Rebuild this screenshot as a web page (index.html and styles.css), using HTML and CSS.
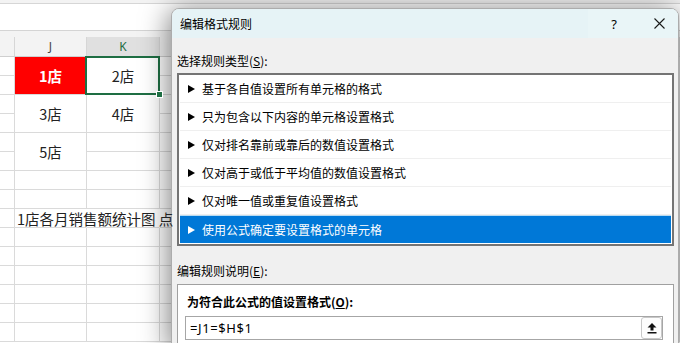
FILE: index.html
```html
<!DOCTYPE html>
<html lang="zh-CN">
<head>
  <meta charset="UTF-8" />
  <meta name="viewport" content="width=device-width, initial-scale=1.0"/>
  <title>编辑格式规则</title>
  <link rel="stylesheet" href="styles.css">
</head>
<body>
  <div class="sheet">
    <div class="ribbon"></div>
    <div class="formula-bar"></div>
    <div class="head-gap"></div>
    <div class="colhead">
      <div class="hcell"></div>
      <div class="hcell">J</div>
      <div class="hcell active">K</div>
      <div class="hcell"></div>
    </div>

    <div class="grid">
      <!-- rows 1-2 -->
      <div class="cell"></div>
      <div class="cell span2 red">1店</div>
      <div class="cell span2 sel">2店</div>
      <div class="cell"></div>
      <div class="cell"></div>
      <div class="cell"></div>
      <!-- rows 3-4 -->
      <div class="cell"></div>
      <div class="cell span2">3店</div>
      <div class="cell span2">4店</div>
      <div class="cell"></div>
      <div class="cell"></div>
      <div class="cell"></div>
      <!-- rows 5-6 -->
      <div class="cell"></div>
      <div class="cell span2">5店</div>
      <div class="cell"></div>
      <div class="cell"></div>
      <div class="cell"></div>
      <div class="cell"></div>
      <div class="cell"></div>
      <!-- row 7, 8 -->
      <div class="cell"></div><div class="cell"></div><div class="cell"></div><div class="cell"></div>
      <div class="cell"></div><div class="cell"></div><div class="cell"></div><div class="cell"></div>
      <!-- row 9: title text overflowing -->
      <div class="cell"></div>
      <div class="cell overflow">1店各月销售额统计图 点</div>
      <div class="cell open"></div>
      <div class="cell"></div>
      <!-- rows 10-15 -->
      <div class="cell"></div><div class="cell"></div><div class="cell"></div><div class="cell"></div>
      <div class="cell"></div><div class="cell"></div><div class="cell"></div><div class="cell"></div>
      <div class="cell"></div><div class="cell"></div><div class="cell"></div><div class="cell"></div>
      <div class="cell"></div><div class="cell"></div><div class="cell"></div><div class="cell"></div>
      <div class="cell"></div><div class="cell"></div><div class="cell"></div><div class="cell"></div>
      <div class="cell"></div><div class="cell"></div><div class="cell"></div><div class="cell"></div>
    </div>
  </div>

  <div class="dialog">
    <div class="titlebar">
      <span class="title">编辑格式规则</span>
      <span class="tbtn help">?</span>
      <span class="tbtn close">
        <svg width="11" height="11" viewBox="0 0 11 11"><path d="M0.5 0.5 L10.5 10.5 M10.5 0.5 L0.5 10.5" stroke="#1a1a1a" stroke-width="1.1" fill="none"/></svg>
      </span>
    </div>

    <div class="dlg-body">
      <div class="label">选择规则类型(<u>S</u>):</div>
      <ul class="rules">
        <li><span class="tri"></span>基于各自值设置所有单元格的格式</li>
        <li><span class="tri"></span>只为包含以下内容的单元格设置格式</li>
        <li><span class="tri"></span>仅对排名靠前或靠后的数值设置格式</li>
        <li><span class="tri"></span>仅对高于或低于平均值的数值设置格式</li>
        <li><span class="tri"></span>仅对唯一值或重复值设置格式</li>
        <li class="selected"><span class="tri"></span>使用公式确定要设置格式的单元格</li>
      </ul>

      <div class="label second">编辑规则说明(<u>E</u>):</div>
      <div class="desc">
        <div class="desc-label">为符合此公式的值设置格式(<u>O</u>):</div>
        <div class="formula-box">
          <span class="formula-text">=J1=$H$1</span>
          <button class="collapse">
            <svg width="10" height="12" viewBox="0 0 10 12"><path d="M5 1 L9.5 5.5 H6.5 V8.5 H3.5 V5.5 H0.5 Z" fill="#111"/><rect x="0.5" y="10" width="9" height="1.5" fill="#111"/></svg>
          </button>
        </div>
      </div>
    </div>
  </div>
</body>
</html>
```

FILE: styles.css
```css
body {
  margin: 0;
  width: 680px;
  height: 343px;
  overflow: hidden;
  position: relative;
  background: #fff;
  font-family: "Noto Sans CJK SC", sans-serif;
}

/* spreadsheet behind the dialog */
.ribbon {
  height: 3px;
  background: #f3f3f3;
  border-bottom: 1px solid #d6d6d6;
}
.formula-bar {
  height: 26px;
  border-bottom: 1px solid #d4d4d4;
}
.head-gap {
  height: 6px;
  background: #f3f3f3;
}
.colhead, .grid {
  display: grid;
  grid-template-columns: 15px 72px 73px 1fr;
}
.colhead {
  height: 19px;
  background: #f3f3f3;
  border-bottom: 1px solid #cfcfcf;
}
.hcell {
  border-right: 1px solid #d6d6d6;
  font-family: "Noto Sans", sans-serif;
  font-size: 12px;
  line-height: 19px;
  text-align: center;
  color: #444;
}
.hcell.active {
  background: #e0e0e0;
  color: #1e6e43;
}
.grid {
  grid-auto-rows: 19px;
}
.cell {
  box-sizing: border-box;
  border-right: 1px solid #dadada;
  border-bottom: 1px solid #dadada;
  font-size: 14.5px;
  color: #222;
  display: flex;
  align-items: center;
  justify-content: center;
}
.span2 {
  grid-row: span 2;
}
.red {
  background: #ff0000;
  color: #fff;
  font-weight: bold;
}
.sel {
  position: relative;
}
.sel::after {
  content: "";
  position: absolute;
  left: -2px;
  top: -1px;
  right: -1px;
  bottom: -1px;
  border: 2px solid #1e6e43;
}
.sel::before {
  content: "";
  position: absolute;
  right: -4px;
  bottom: -4px;
  width: 5px;
  height: 5px;
  background: #1e6e43;
  border: 1px solid #fff;
  z-index: 2;
}
.overflow {
  justify-content: flex-start;
  padding-left: 2px;
  white-space: nowrap;
  border-right-color: transparent;
  position: relative;
  z-index: 1;
}
.open {
  border-right-color: transparent;
}

/* dialog */
.dialog {
  position: absolute;
  left: 171px;
  top: 8px;
  width: 506px;
  height: 340px;
  border: 1px solid #acacac;
  border-radius: 8px 8px 0 0;
  background: #f0f0f0;
  box-shadow: -2px 2px 28px rgba(0, 0, 0, 0.5);
  overflow: hidden;
  font-size: 12px;
  color: #000;
}
.titlebar {
  height: 29px;
  background: #e6f3f6;
  display: flex;
  align-items: center;
  padding-left: 8px;
}
.title {
  flex: 1;
}
.tbtn {
  height: 29px;
  display: flex;
  align-items: center;
  justify-content: center;
}
.help {
  width: 52px;
  font-family: "Noto Sans", sans-serif;
  font-size: 13px;
  background: #e9f5f7;
}
.close {
  width: 38px;
  background: #e9f5f7;
}
.dlg-body {
  padding: 0 4px 0 5px;
}
.label {
  margin-top: 15px;
  line-height: 16px;
}
.label.second {
  margin-top: 17px;
}
.rules {
  list-style: none;
  margin: 4px 0 0;
  padding: 0 1px 1px;
  background: #fff;
  border: 2px solid #747474;
}
.rules li {
  box-sizing: border-box;
  height: 28px;
  border-bottom: 1px solid #efefef;
  display: flex;
  align-items: center;
  gap: 7px;
  padding-left: 8px;
}
.rules li.selected {
  background: #0078d7;
  color: #fff;
  border-bottom: none;
  border-top: 1px solid #b9dcf3;
}
.tri {
  width: 0;
  height: 0;
  border-left: 7px solid #000;
  border-top: 4px solid transparent;
  border-bottom: 4px solid transparent;
}
.selected .tri {
  border-left-color: #fff;
}
.desc {
  margin-top: 5px;
  height: 80px;
  background: #fff;
  border: 1px solid #a0a0a0;
  padding: 9px 10px 0 7px;
}
.desc-label {
  font-weight: bold;
  line-height: 16px;
  padding-left: 2px;
}
.formula-box {
  box-sizing: border-box;
  margin-top: 6px;
  height: 24px;
  border: 1px solid #a6a6a6;
  display: flex;
  align-items: center;
  padding-left: 4px;
}
.formula-text {
  flex: 1;
  font-family: "Noto Sans", sans-serif;
  font-size: 13px;
  letter-spacing: 0.6px;
}
.collapse {
  width: 21px;
  height: 22px;
  padding: 0;
  border: 1px solid #c8c8c8;
  border-radius: 3px;
  background: #fdfdfd;
  display: flex;
  align-items: center;
  justify-content: center;
}
```
